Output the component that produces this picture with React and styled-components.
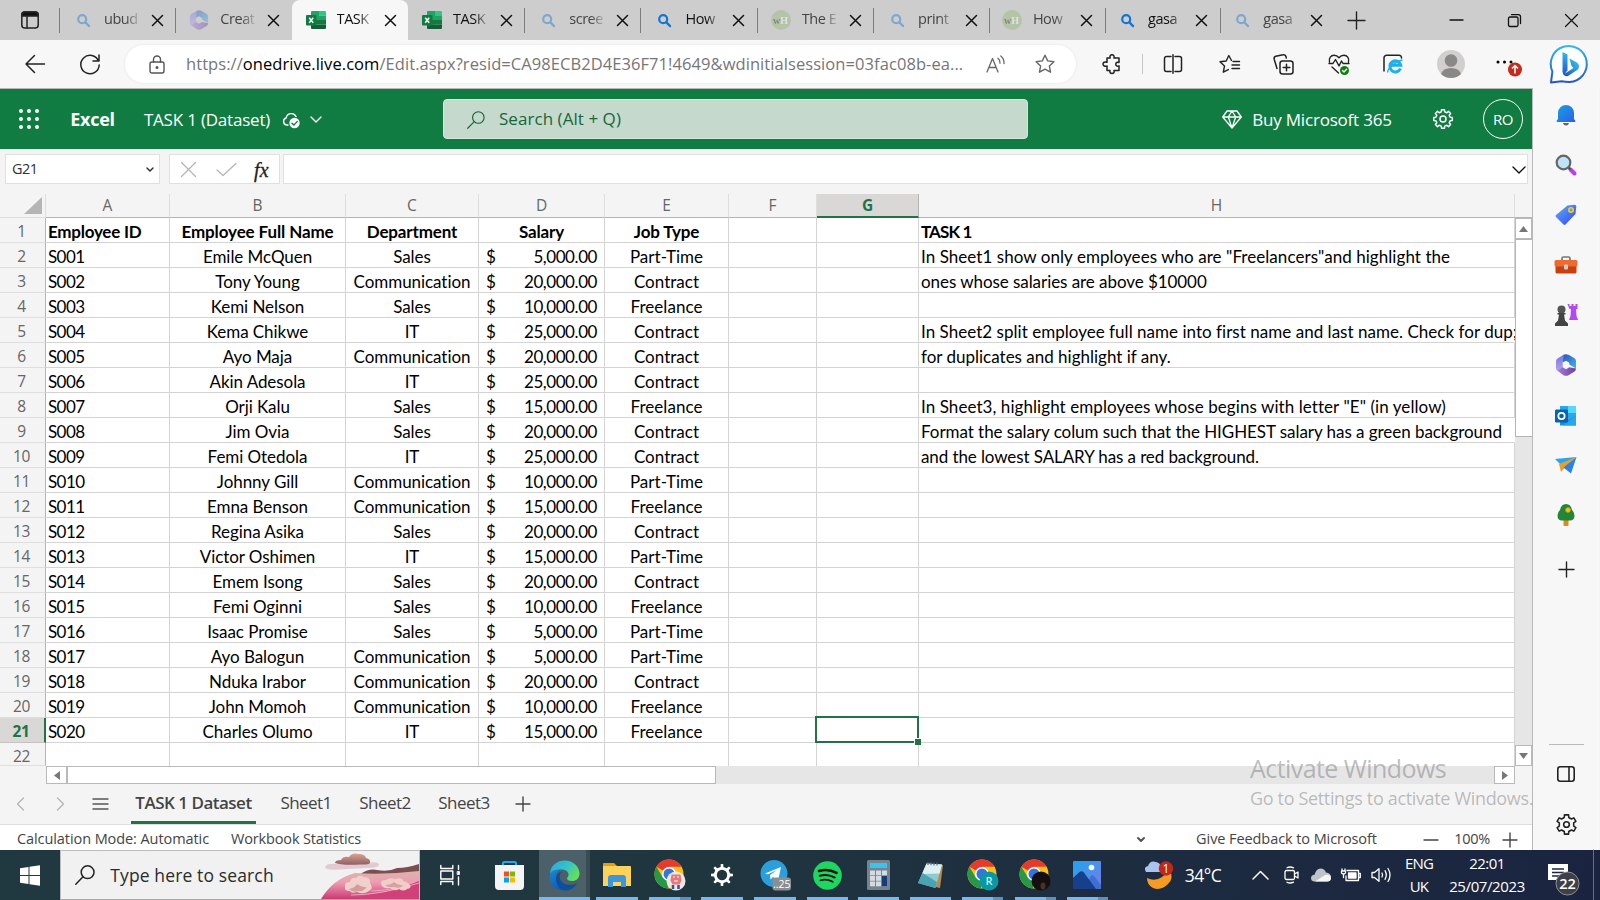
import React from 'react';
import styled, { createGlobalStyle, css } from 'styled-components';

const UI = '"Open Sans", "Noto Sans", sans-serif';
const CELL = 'Lato, "Open Sans", sans-serif';

const Global = createGlobalStyle`
  html, body { margin: 0; padding: 0; background: #f4f4f4; overflow: hidden; }
  * { box-sizing: border-box; }
  svg { display: block; flex: none; overflow: visible; }
`;

const Desktop = styled.div`
  width: 1600px;
  height: 900px;
  display: flex;
  flex-direction: column;
  overflow: hidden;
  position: relative;
  font-family: ${UI};
`;

const Label = styled.span`
  font-size: ${(p) => p.$size}px;
  letter-spacing: ${(p) => p.$ls || 0}px;
  font-weight: ${(p) => p.$weight || 400};
  color: ${(p) => p.$color || 'inherit'};
  white-space: nowrap;
  line-height: 1.3;
`;

const Slot = styled.div`
  width: ${(p) => p.$w}px;
  height: ${(p) => (p.$h ? `${p.$h}px` : '100%')};
  margin-left: ${(p) => p.$ml || 0}px;
  padding-top: ${(p) => p.$pt || 0}px;
  flex: none;
  display: flex;
  align-items: center;
  justify-content: center;
`;

/* ---------- tab strip ---------- */

const TabStrip = styled.div`
  height: 40px;
  flex: none;
  display: flex;
  background: #cdcdcd;
`;

const TabRule = styled.div`
  width: 1px;
  height: 25px;
  align-self: center;
  background: ${(p) => (p.$hidden ? 'transparent' : '#7c7c7c')};
`;

const Tab = styled.div`
  width: ${(p) => (p.$narrow ? 115.2 : 116.3)}px;
  flex: none;
  height: 40px;
  display: flex;
  align-items: center;
  border-radius: 8px 8px 0 0;
  background: ${(p) => (p.$active ? '#f7f7f7' : 'transparent')};
`;

const TabIcon = styled.div`
  width: 20px;
  height: 20px;
  margin-left: ${(p) => (p.$narrow ? 11.5 : 13)}px;
  display: flex;
  align-items: center;
  justify-content: center;
  opacity: ${(p) => (p.$dim ? 0.42 : 1)};
`;

const TabTitle = styled.div`
  width: 36px;
  height: 24px;
  margin-left: 11px;
  overflow: hidden;
  white-space: nowrap;
  font-size: 14.5px;
  letter-spacing: -0.45px;
  line-height: 22px;
  color: ${(p) => (p.$dim ? '#444' : '#111')};
  mask-image: linear-gradient(90deg, #000 60%, transparent 105%);
`;

const TabClose = styled.div`
  margin-left: 12px;
`;

/* ---------- toolbar ---------- */

const Toolbar = styled.div`
  height: 48px;
  flex: none;
  display: flex;
  align-items: center;
  background: #f7f7f7;
`;

const AddressBar = styled.div`
  width: 951px;
  height: 38px;
  margin-left: 10px;
  padding-left: 12px;
  padding-right: 7px;
  border-radius: 19px;
  background: #fff;
  box-shadow: 0 0 3px rgba(0, 0, 0, 0.08);
  display: flex;
  align-items: center;
`;

const Url = styled.div`
  flex: 1;
  margin-left: 9px;
  font-size: 16.5px;
  letter-spacing: 0.07px;
  line-height: 24px;
  color: #767676;
  white-space: nowrap;
  b { font-weight: 400; color: #000; }
`;

const Divider = styled.div`
  width: 1px;
  height: 20px;
  background: #c6c6c6;
`;

/* ---------- page ---------- */

const Body = styled.div`
  height: 762px;
  flex: none;
  display: flex;
`;

const Page = styled.div`
  width: 1533px;
  flex: none;
  display: flex;
  flex-direction: column;
  background: #f4f4f4;
  border-top: 1px solid #b9b9b9;
  border-right: 1px solid #b9b9b9;
`;

const Suite = styled.div`
  height: 60px;
  flex: none;
  display: flex;
  align-items: center;
  background: #107c41;
  color: #fff;
`;

const SuiteSearch = styled.div`
  width: 585px;
  height: 40px;
  margin-left: 122px;
  padding: 1px 0 0 23px;
  border-radius: 4px;
  border: 1px solid #d5e6db;
  background: #c5d9cc;
  color: #15673a;
  display: flex;
  align-items: center;
  gap: 14px;
`;

const Initials = styled.div`
  width: 40px;
  height: 40px;
  margin-left: 30px;
  padding-top: 2px;
  border: 1px solid #fff;
  border-radius: 50%;
  display: flex;
  align-items: center;
  justify-content: center;
`;

const FormulaBar = styled.div`
  height: 45px;
  flex: none;
  padding: 5px 0 0 5px;
  display: flex;
`;

const FormulaBox = styled.div`
  width: ${(p) => p.$w}px;
  height: 30px;
  margin-right: ${(p) => p.$mr || 0}px;
  padding: 1px ${(p) => p.$pr || 0}px 0 6px;
  border: 1px solid #e0e0e0;
  background: #fff;
  color: #333;
  display: flex;
  align-items: center;
  justify-content: space-between;
`;

const Fx = styled.span`
  font: italic 400 20px "Liberation Serif", serif;
  letter-spacing: 0.3px;
  line-height: 24px;
  color: #222;
  -webkit-text-stroke: 0.3px #222;
`;

/* ---------- sheet ---------- */

const SheetArea = styled.div`
  height: 572px;
  flex: none;
  display: flex;
`;

const Sheet = styled.div`
  width: 1515px;
  flex: none;
  height: 572px;
  overflow: hidden;
`;

const GridRow = styled.div`
  display: grid;
  grid-template-columns: 46px 124px 176px 133px 126px 124px 88px 102px 596px;
  grid-template-rows: 100%;
  height: ${(p) => p.$h || 25}px;
`;

const ColHead = styled.div`
  border-right: 1px solid ${(p) => (p.$on ? '#b5b5b5' : '#dedede')};
  border-bottom: ${(p) => (p.$on ? '2px solid #217346' : '1px solid #b5b5b5')};
  background: ${(p) => (p.$on ? '#d9d8d6' : '#f4f4f4')};
  color: ${(p) => (p.$on ? '#217346' : '#666')};
  font-weight: ${(p) => (p.$on ? 700 : 400)};
  font-size: 15.5px;
  line-height: 22px;
  text-align: center;
`;

const Corner = styled.div`
  border-right: 1px solid #dedede;
  border-bottom: 1px solid #dedede;
  display: flex;
  align-items: flex-end;
  justify-content: flex-end;
  padding: 0 3px 3px 0;
`;

const RowHead = styled.div`
  padding: 1px 2px 0 0;
  font-size: 15.5px;
  line-height: 24px;
  letter-spacing: -0.3px;
  text-align: center;
  border-bottom: 1px solid ${(p) => (p.$on ? '#c4c4c4' : '#dedede')};
  border-right: ${(p) => (p.$on ? '2px solid #217346' : '1px solid #b5b5b5')};
  background: ${(p) => (p.$on ? '#d9d8d6' : '#f4f4f4')};
  color: ${(p) => (p.$on ? '#217346' : '#666')};
  font-weight: ${(p) => (p.$on ? 700 : 400)};
`;

const Cell = styled.div`
  position: relative;
  padding: 1.5px ${(p) => p.$pad || 2}px 0;
  border-right: 1px solid ${(p) => (p.$open ? '#fff' : '#d4d4d4')};
  border-bottom: ${(p) => (p.$last ? 0 : 1)}px solid #d4d4d4;
  background: #fff;
  color: #000;
  font-family: ${CELL};
  font-size: 17px;
  line-height: 24px;
  letter-spacing: ${(p) => (p.$ls === undefined ? -0.06 : p.$ls)}px;
  font-weight: ${(p) => (p.$bold ? 700 : 400)};
  text-align: ${(p) => (p.$center ? 'center' : 'left')};
  white-space: nowrap;
  ${(p) => p.$money && css`
    display: flex;
    justify-content: space-between;
  `}
`;

const Selection = styled.div`
  position: absolute;
  z-index: 2;
  inset: -2px -1px -1px -2px;
  border: 2px solid #217346;
  &::after {
    content: '';
    position: absolute;
    right: -4px;
    bottom: -4px;
    width: 6px;
    height: 6px;
    background: #217346;
    border: solid #fff;
    border-width: 1px 0 0 1px;
  }
`;

const VScroll = styled.div`
  width: 17px;
  padding-top: 24px;
  display: flex;
  flex-direction: column;
  background: linear-gradient(#f4f4f4 23px, #b5b5b5 23px, #b5b5b5 24px, #e6e6e6 24px);
`;

const ScrollButton = styled.div`
  width: ${(p) => p.$w}px;
  height: ${(p) => p.$h}px;
  flex: none;
  border: 1px solid #b9b9b9;
  background: #fff;
  display: flex;
  align-items: center;
  justify-content: center;
`;

const VThumb = styled.div`
  width: 17px;
  height: 198px;
  border: 1px solid #b5b5b5;
  border-right: 0;
  background: #fff;
  margin-bottom: auto;
`;

const HScroll = styled.div`
  height: 18px;
  flex: none;
  width: 1469px;
  margin-left: 46px;
  display: flex;
  background: #e6e6e6;
`;

const HThumb = styled.div`
  width: 649px;
  height: 18px;
  margin-right: auto;
  border: 1px solid #b9b9b9;
  background: #fff;
`;

const SheetTabs = styled.div`
  height: 41px;
  flex: none;
  display: flex;
  align-items: center;
  border-bottom: 1px solid #dedede;
  color: #444;
`;

const SheetTab = styled.div`
  width: ${(p) => p.$w}px;
  height: 40px;
  margin-left: ${(p) => p.$ml || 0}px;
  flex: none;
  display: flex;
  align-items: center;
  justify-content: center;
  padding-top: ${(p) => (p.$on ? 1 : 0)}px;
  padding-bottom: ${(p) => (p.$on ? 0 : 2)}px;
  border-bottom: ${(p) => (p.$on ? '3px solid #217346' : '0')};
`;

const StatusBar = styled.div`
  height: 25px;
  flex: none;
  display: flex;
  align-items: center;
  padding: 4px 15px 0 17px;
  background: #fff;
  color: #444;
`;

const Side = styled.div`
  width: 66px;
  background: #f7f7f7;
  display: flex;
  flex-direction: column;
  align-items: center;
  padding-top: 2px;
`;

const SideRule = styled.div`
  width: 35px;
  height: 1px;
  margin: auto 0 3px;
  background: #b9b9b9;
`;

const Watermark = styled.div`
  position: absolute;
  left: 1250px;
  top: 752px;
  width: 283px;
  display: flex;
  flex-direction: column;
  gap: 2px;
  color: rgba(120, 120, 120, 0.48);
`;

/* ---------- taskbar ---------- */

const Taskbar = styled.div`
  height: 50px;
  flex: none;
  display: flex;
  align-items: center;
  color: #fff;
  background: linear-gradient(90deg, #203840 0%, #20363f 45%, #1d2c3f 70%, #1a2440 100%);
`;

const TaskSearch = styled.div`
  width: 360px;
  height: 50px;
  flex: none;
  padding-left: 14px;
  display: flex;
  align-items: center;
  border: 1px solid #bdbdbd;
  border-bottom-color: #a8a8a8;
  background: #f1f1f1;
  color: #2b2b2b;
`;

const TaskApp = styled.div`
  width: ${(p) => p.$w}px;
  height: 50px;
  flex: none;
  display: flex;
  flex-direction: column;
  align-items: center;
  justify-content: space-between;
  background: ${(p) => (p.$on ? 'linear-gradient(90deg, #4b6068 47px, #3a4b52 47px)' : 'transparent')};
  &::before { content: ''; height: 3px; }
  &::after {
    content: '';
    width: ${(p) => (p.$bar ? p.$bar : 0)}px;
    height: 3px;
    background: ${(p) => (p.$multi ? 'linear-gradient(90deg, #76b9ed 75%, #5b91bc 75%)' : '#76b9ed')};
  }
`;

const Stack = styled.div`
  width: ${(p) => p.$w}px;
  margin-left: ${(p) => p.$ml || 0}px;
  flex: none;
  display: flex;
  flex-direction: column;
  align-items: center;
  gap: 3px;
`;

/* ---------- icons ---------- */

const Line = ({ w = 20, h, box, c = '#222', sw = 1.3, children }) => (
  <svg width={w} height={h || w} viewBox={box || `0 0 ${w} ${h || w}`} fill="none" stroke={c} strokeWidth={sw} strokeLinecap="round" strokeLinejoin="round">{children}</svg>
);
const Cross = ({ s = 11, c = '#111', sw = 1.5 }) => <Line w={s} c={c} sw={sw}><path d={`M.5.5l${s - 1} ${s - 1}M${s - 0.5}.5l-${s - 1} ${s - 1}`} /></Line>;
const PlusIcon = ({ s = 16, c = '#222', sw = 1.4 }) => <Line w={s} c={c} sw={sw}><path d={`M${s / 2} 0v${s}M0 ${s / 2}h${s}`} /></Line>;
const Chevron = ({ w = 9, h = 5, c = '#333', sw = 1.4 }) => <Line w={w} h={h} c={c} sw={sw}><path d={`M0 0l${w / 2} ${h}l${w / 2}-${h}`} /></Line>;
const Magnifier = ({ s = 13, c = '#1474d0', sw = 2.2 }) => <Line w={s} box="0 0 13 13" c={c} sw={sw}><circle cx="5.2" cy="5.2" r="4" /><path d="M8.4 8.4l3.7 3.7" /></Line>;
const ThinSearch = ({ s = 20, c, sw = 1.3 }) => <Line w={s} box="0 0 20 20" c={c} sw={sw}><circle cx="12.6" cy="7.2" r="6.4" /><path d="M8 11.8L.8 19.2" /></Line>;

const ExcelIcon = () => (
  <svg width="20" height="18" viewBox="0 0 20 18">
    <path d="M6 0h7v9H5V1a1 1 0 011-1z" fill="#21a366" /><path d="M13 0h6a1 1 0 011 1v3.5h-7z" fill="#33c481" />
    <path d="M13 4.5h7V9h-7z" fill="#21a366" /><path d="M5 9h8v4.500H5z" fill="#107c41" /><path d="M13 9h7v4.500h-7z" fill="#107c41" />
    <path d="M5 13.500h15V17a1 1 0 01-1 1H6a1 1 0 01-1-1z" fill="#185c37" />
    <rect y="4" width="10.500" height="10.500" rx="1" fill="#107c41" />
    <path d="M3.200 6.800l4 5M7.200 6.800l-4 5" stroke="#fff" strokeWidth="1.500" />
  </svg>
);
const M365 = ({ s = 22 }) => (
  <svg width={s} height={s} viewBox="0 0 22 22">
    <defs>
      <linearGradient id="ma" x1="0" y1="0" x2="1" y2="1"><stop offset="0" stopColor="#2b50b8" /><stop offset="1" stopColor="#42b8e8" /></linearGradient>
      <linearGradient id="mb" x1="0" y1="0" x2="0" y2="1"><stop offset="0" stopColor="#6d78e0" /><stop offset="1" stopColor="#b7a1ee" /></linearGradient>
      <linearGradient id="mc" x1="0" y1="0" x2="1" y2="0"><stop offset="0" stopColor="#a07ee0" /><stop offset="1" stopColor="#6f3f98" /></linearGradient>
    </defs>
    <path d="M8.500.8q2.500-1.200 5 0l6 3.500Q21 5.300 21 7v7.500l-6.700-4V8.700L11 6.800 7.500 8.500V2z" fill="url(#ma)" />
    <path d="M9 .6L7.700 8.200v7.300L3 17.300q-2-.8-2-3.300V7.500q0-2 1.500-3z" fill="url(#mb)" />
    <path d="M2.500 16.800l5.200-3.500L11 15.200l3.300-2 6.700 1.300q0 2-1.500 3l-6 3.700q-2.500 1.200-5 0z" fill="url(#mc)" />
  </svg>
);
const WikiIcon = () => (
  <svg width="20" height="20" viewBox="0 0 20 20"><circle cx="10" cy="10" r="10" fill="#93b874" /><text x="2" y="13.500" fontFamily="Liberation Serif, serif" fontWeight="700" fontSize="10" fill="#222">w<tspan fill="#fff">H</tspan></text></svg>
);
const Workspaces = () => (
  <Line w={18} sw={1.5} c="#222"><rect x=".8" y="1" width="16.400" height="16" rx="3" /><path d="M1 3.500Q1 1 3.500 1h11Q17 1 17 3.500V5H1z" fill="#111" /><path d="M6 5v12" /></Line>
);
const Lock = () => <Line w={16} h={19} c="#555" sw={1.4}><rect x="1" y="7" width="14" height="11" rx="2" /><path d="M4.500 7V4.500a3.500 3.500 0 017 0V7" /><circle cx="8" cy="12.500" r=".8" fill="#555" /></Line>;
const Puzzle = () => <Line w={20} sw={1.5}><path d="M5 4h3.200C7.400 1.800 8.500.8 10 .8s2.700 1 1.900 3.200H17v4.500c-2-.8-3.200.2-3.200 1.700s1.200 2.500 3.200 1.700V16.500h-5c.7 2-.5 3-2 3s-2.600-1-2-3H5V12c-2.200.7-4-.2-4-1.900s1.800-2.600 4-1.900z" /></Line>;
const Split = () => <Line w={20} sw={1.5}><path d="M8 2.500H3.500a2 2 0 00-2 2v11a2 2 0 002 2H8M12 2.500h4.500a2 2 0 012 2v11a2 2 0 01-2 2H12M10 .8v18.400" /></Line>;
const FavList = () => <Line w={21} h={20} sw={1.4}><path d="M12.500 6.500L9.800 1.500 7.200 7l-6.200.8 4.500 4.200-1.200 6.200 5-2.600M14 7.500h6.500M13 11h7.500M13 14.500h7.500" /></Line>;
const StarIcon = () => <Line w={20} c="#666" sw={1.4}><path d="M10 1.200l2.700 5.700 6.200.8-4.500 4.300 1.100 6.200L10 15.200l-5.500 3 1.100-6.200L1.100 7.700l6.200-.8z" /></Line>;
const Collections = () => <Line w={21} sw={1.5}><rect x="7" y="7" width="13" height="13" rx="2.500" /><path d="M13.500 10.200v6.600M10.200 13.500h6.600M4 14.500L1.200 5.200A2.400 2.400 0 012.800 2.300L10 .8a2.400 2.400 0 013 2l.3 1.200" /></Line>;
const Health = () => (
  <Line w={22} h={21} sw={1.4}><path d="M1.500 8C.5 4 3 1.200 6 1.200c2.500 0 4 1.300 5 2.600 1-1.300 2.500-2.600 5-2.600 3 0 5.500 2.800 4.500 6.800M1 9.500h4l2.500-4L11 12l2.500-5 1.500 2.500h6M4 13l6.500 6" /><circle cx="16.500" cy="16.500" r="4.500" fill="#107c10" stroke="none" /><path d="M14.500 16.500l1.500 1.500 2.600-2.800" stroke="#fff" /></Line>
);
const IEMode = () => (
  <svg width="22" height="21" viewBox="0 0 22 21"><path d="M2 17V4a2.700 2.700 0 012.700-2.700H17A2.500 2.500 0 0119.500 4" fill="none" stroke="#222" strokeWidth="1.500" strokeLinecap="round" />
    <path d="M18.500 14.500a5.500 5.500 0 11.300-3.200H9" fill="none" stroke="#1fb0ea" strokeWidth="3" /><path d="M6 18.500c-1.500-2 6-11 14.500-12.500" fill="none" stroke="#1fb0ea" strokeWidth="1.400" /></svg>
);
const Avatar = () => (
  <svg width="28" height="28" viewBox="0 0 28 28"><circle cx="14" cy="14" r="14" fill="#d2d0ce" /><circle cx="14" cy="10.500" r="6.300" fill="#8a8886" /><path d="M4 24q2-6 10-6t10 6q-4 4-10 4T4 24z" fill="#8a8886" /></svg>
);
const More = () => (
  <svg width="28" height="22" viewBox="0 0 28 22"><circle cx="3" cy="9" r="1.500" /><circle cx="9.500" cy="9" r="1.500" /><circle cx="16" cy="9" r="1.500" /><circle cx="20" cy="16.500" r="7" fill="#c42b1c" /><path d="M20 20.500V13M17 15.500l3-3 3 3" fill="none" stroke="#fff" strokeWidth="1.500" /></svg>
);
const Bing = () => (
  <svg width="40" height="40" viewBox="0 0 40 40">
    <defs><linearGradient id="ba" x1="0" y1="0" x2="0" y2="1"><stop offset="0" stopColor="#2fb9ee" /><stop offset="1" stopColor="#2754c9" /></linearGradient><linearGradient id="bb" x1="0" y1="1" x2="1" y2="0"><stop offset="0" stopColor="#1b48c8" /><stop offset="1" stopColor="#38d6e8" /></linearGradient></defs>
    <path d="M2 38.500l1.400-11A18 18 0 1120.500 38q-4 0-8-.800z" fill="#fff" stroke="url(#ba)" strokeWidth="2" strokeLinejoin="round" />
    <path d="M13.500 8l5 2.500v15.700L15 31q-1.500-1.500-1.500-3.500z" fill="url(#ba)" /><path d="M20.500 14.500l7.500 4q3.500 2.700 1 7L19 32q-3 1-4.500-1.500l10-6.500-2-2z" fill="url(#bb)" />
  </svg>
);
const Waffle = () => <svg width="20" height="20" viewBox="0 0 20 20" fill="#fff">{[2, 10, 18].map((x) => [2, 10, 18].map((y) => <circle key={`${x}-${y}`} cx={x} cy={y} r="2" />))}</svg>;
const CloudSaved = () => (
  <Line w={19} h={17} c="#fff" sw={1.4}><path d="M6 13H4.500a3.600 3.600 0 01-.3-7A5.200 5.200 0 0114 4.500" /><circle cx="12.500" cy="11" r="5.200" fill="#fff" stroke="none" /><path d="M10 11.200l1.900 1.900 3.400-3.700" stroke="#107c41" /></Line>
);
const Diamond = () => <Line w={20} h={19} c="#fff" sw={1.3}><path d="M5 1h10l4.300 6L10 18 .7 7zM.7 7h18.600M6.300 7L10 18l3.700-11M6.300 7L10 1l3.700 6" /></Line>;
const cog = (n, R, r, c, a = 0.3, b = 0.42) => {
  let d = '';
  for (let i = 0; i < n; i += 1) {
    [[-b, r], [-a, R], [a, R], [b, r]].forEach(([o, rad], j) => {
      const t = ((i + o) * 2 * Math.PI) / n;
      d += `${i + j === 0 ? 'M' : 'L'}${(c + rad * Math.sin(t)).toFixed(2)} ${(c - rad * Math.cos(t)).toFixed(2)}`;
    });
  }
  return `${d}z`;
};
const Gear = ({ s = 20, c = '#fff', n = 8, sw = 1.5, hole = 3, inner = 7.3 }) => <Line w={s} box="0 0 20 20" c={c} sw={sw}><path d={cog(n, 9.4, inner, 10, 0.2, 0.3)} /><circle cx="10" cy="10" r={hole} /></Line>;
const SolidGear = () => <svg width="22" height="22" viewBox="0 0 22 22"><path fillRule="evenodd" fill="#fff" d={`${cog(8, 11, 8.2, 11, 0.14, 0.22)}M11 5.800a5.200 5.200 0 100 10.400 5.200 5.200 0 000-10.400z`} /></svg>;
const Tri = ({ d, w = 9, h = 6 }) => <svg width={w} height={h} viewBox={`0 0 ${w} ${h}`}><path d={d} fill="#777" /></svg>;

const Bell = () => <svg width="20" height="22" viewBox="0 0 20 22"><defs><linearGradient id="be" x1="0" y1="0" x2="1" y2="1"><stop offset="0" stopColor="#1aa0e4" /><stop offset="1" stopColor="#2a5fe6" /></linearGradient></defs><path d="M2 15V9a8 8 0 0116 0v6l1.500 2q0 1-1 1h-17q-1 0-1-1z" fill="url(#be)" /><path d="M7 19h6q-.5 2.500-3 2.500T7 19z" fill="#666" /></svg>;
const ColorSearch = () => <svg width="22" height="22" viewBox="0 0 22 22"><path d="M15.500 15.500l4 4" stroke="#c23af0" strokeWidth="4" strokeLinecap="round" /><path d="M12.500 12.500l3 3" stroke="#555" strokeWidth="2.500" /><circle cx="8.500" cy="8.500" r="6.800" fill="#bfe3f7" stroke="#666" strokeWidth="2.200" /></svg>;
const Tag = () => <svg width="22" height="22" viewBox="0 0 22 22"><defs><linearGradient id="tg" x1="0" y1="0" x2="1" y2="1"><stop offset="0" stopColor="#5fb0fa" /><stop offset="1" stopColor="#3345f0" /></linearGradient></defs><path d="M12.500 1.500l7-.8q1.800 0 1.800 1.800L20.500 10 10.500 20.500q-1 .8-2 0L1 13q-1-1 0-2z" fill="url(#tg)" /><circle cx="16" cy="6" r="2.200" fill="#79b" stroke="#f7d21c" strokeWidth="1.500" /></svg>;
const Toolbox = () => <svg width="24" height="18" viewBox="0 0 24 18"><path d="M8 4V2.500Q8 1 9.500 1h5Q16 1 16 2.500V4" fill="none" stroke="#777" strokeWidth="1.700" /><rect x="1.500" y="9" width="21" height="8.500" rx="1.500" fill="#c93f10" /><rect x=".5" y="4" width="23" height="6.500" rx="1.500" fill="#ef6a2e" /><rect x="10" y="8.500" width="4" height="5" rx="1" fill="#ccc" /></svg>;
const Chess = () => <svg width="24" height="24" viewBox="0 0 24 24"><path d="M13.500 1h2v2h2V1h2v2h2V1h2v5h-1.500l.5 7 1.500 4h-9l1.500-4 .5-7h-1.500z" fill="#b347f5" /><circle cx="7.500" cy="6.500" r="4" fill="#555" /><path d="M3.500 10h8v1.500H10l1 6 3 3V23H1v-2.500l3-3 1-6H3.500z" fill="#444" /></svg>;
const Outlook = () => <svg width="22" height="21" viewBox="0 0 22 21"><path d="M5 1h15a1 1 0 011 1v17H5z" fill="#28a8ea" /><path d="M13 1h7a1 1 0 011 1v6h-8z" fill="#50d9ff" /><path d="M5 20.500V11l8 4.500 8-4.500v9.500z" fill="#1490df" /><path d="M21 11v9.500H8z" fill="#28a8ea" /><rect y="4.500" width="13" height="13" rx="1.200" fill="#0a64ad" /><circle cx="6.500" cy="11" r="3.200" fill="none" stroke="#fff" strokeWidth="1.700" /></svg>;
const Plane = () => <svg width="22" height="18" viewBox="0 0 22 18"><path d="M0 3L21.500 1 6 9z" fill="#2aa3f0" /><path d="M21.500 1L4 8l2 8 3.500-3.700z" fill="#e8a02c" /><path d="M21.500 1L8.500 11.500 16 17.500z" fill="#2f7fe8" /></svg>;
const Tree = () => <svg width="18" height="22" viewBox="0 0 18 22"><rect x="6.500" y="14" width="5" height="8" rx="1" fill="#e08a1e" /><path d="M9 0q5 0 6 6 2.500 2 2.500 5.500 0 5-4.500 5H5q-4.500 0-4.500-5Q.5 8 3 6 4 0 9 0z" fill="#238636" /><path d="M11 3.500v5M8.500 6h5" stroke="#f6b91a" strokeWidth="2.800" /></svg>;
const Panel = () => <Line w={18} h={16} sw={1.6}><rect x=".8" y=".8" width="16.400" height="14.400" rx="2.500" /><path d="M12 1v14" /></Line>;

const Edge = () => (
  <svg width="31" height="31" viewBox="0 0 31 31"><defs><linearGradient id="ea" x1="0" y1="0" x2="1" y2=".5"><stop offset="0" stopColor="#2aa7e2" /><stop offset=".6" stopColor="#35c4c8" /><stop offset="1" stopColor="#62df5b" /></linearGradient><linearGradient id="eb" x1="0" y1="0" x2=".3" y2="1"><stop offset="0" stopColor="#1a86d8" /><stop offset="1" stopColor="#0f5fb5" /></linearGradient></defs>
    <path d="M1 14C1.500 5 8.500.5 15.500.5c9 0 15 6.500 15 13 0 5-3.500 7.500-7.500 7.500-3.500 0-5-1.500-5-2.500s1.500-1.500 1.500-4c0-2.500-2.500-5-7-5S2 12 1 14z" fill="url(#ea)" />
    <path d="M1 13.500C2.500 10.500 7 9 11.500 9.500c-3 1-5.500 5-4.500 9.500s5 9.500 11 9.500c-1 1.500-3 2-5 1.800C5 29.500.5 23 .5 17z" fill="url(#eb)" />
    <path d="M13 12c-2 1-3 4-2 7s5 6 10 6c3 0 5.500-1 7-2-2 4.500-6.500 7.500-11.500 7.500C10 30 7 24 7 19.500 7 15.500 9.500 12 13 12z" fill="#0c4fa0" /></svg>
);
const Explorer = () => <svg width="28" height="24" viewBox="0 0 28 24"><path d="M0 1q0-1 1-1h10l3 3H0z" fill="#e3a008" /><path d="M0 3h27q1 0 1 1v19H0z" fill="#ffd35a" /><path d="M5 24v-9q0-3 3-3h12q3 0 3 3v9h-5v-5h-8v5z" fill="#3a96dd" /></svg>;
const Chrome = ({ children }) => (
  <svg width="32" height="32" viewBox="0 0 32 32"><circle cx="15" cy="15" r="14.500" fill="#fbc116" /><path d="M15 15L2.400 7.800A14.500 14.500 0 0127.600 7.800H15z" fill="#e33b2e" /><path d="M2.400 7.800L8.800 18.500 15 22l-1 7.500A14.500 14.500 0 012.400 7.800z" fill="#279847" /><circle cx="15" cy="15" r="7" fill="#fff" /><circle cx="15" cy="15" r="5.500" fill="#3573e0" />{children}</svg>
);
const Face = () => <g><circle cx="22" cy="22" r="9.500" fill="#eee8e2" /><path d="M17.500 15.500h9l1 6-2 4h-7l-2-4z" fill="#e8767a" /><path d="M19 18h2M23 18h2M20 22h4" stroke="#fff" strokeWidth="1.200" /><path d="M19 26v4M24.500 26v4" stroke="#2d55a5" strokeWidth="2.500" /></g>;
const RBadge = () => <g><circle cx="22" cy="22" r="9.500" fill="#0b97a4" /><text x="22" y="26" textAnchor="middle" fontFamily="Open Sans, sans-serif" fontSize="11" fontWeight="600" fill="#c5eef0">R</text></g>;
const DarkBadge = () => <g><circle cx="22" cy="22" r="9.500" fill="#15100f" /><ellipse cx="24" cy="27" rx="2.500" ry="3.500" fill="#4a3026" /></g>;
const Telegram = () => (
  <svg width="32" height="32" viewBox="0 0 32 32"><circle cx="15" cy="14.500" r="13.500" fill="#2a9fdc" /><path d="M6 14.500L22 8l-3 14-5-4-2.500 2.500-.5-4.500 7-5-9 4.200z" fill="#fff" /><rect x="13.500" y="18.500" width="18.500" height="13" rx="3" fill="#8a8f92" /><text x="22.700" y="29" textAnchor="middle" fontFamily="Open Sans, sans-serif" fontSize="10.500" fill="#fff">..25</text></svg>
);
const Spotify = () => <svg width="29" height="29" viewBox="0 0 29 29"><circle cx="14.500" cy="14.500" r="14.300" fill="#1ed760" /><g fill="none" stroke="#101010" strokeLinecap="round"><path d="M6 10q9-2.800 17.500 1.800" strokeWidth="2.600" /><path d="M6.800 14.800q7.500-2.200 14.700 1.600" strokeWidth="2.200" /><path d="M7.500 19.300q6.500-1.700 12.200 1.400" strokeWidth="1.800" /></g></svg>;
const Calculator = () => (
  <svg width="23" height="30" viewBox="0 0 23 30"><rect width="23" height="30" rx="1.500" fill="#75838f" /><rect x="3" y="3" width="17" height="5" fill="#39c4ee" />
    {[10.5, 16, 21.5].map((y) => [3, 9, 15].map((x) => <rect key={`${x}${y}`} x={x} y={y} width="5" height={4.8} fill="#d4dbe1" />))}<rect x="15" y="16" width="5" height="10.300" fill="#153e78" /></svg>
);
const Notes = () => <svg width="27" height="27" viewBox="0 0 27 27"><path d="M10 2l16 1-3 23-4-1z" fill="#b98b4a" /><path d="M9.500 1.500L25 2.500 18.500 26 1 21z" fill="#8fcad2" /><path d="M9.500 1.500L25 2.500l-2.500 9L5 12z" fill="#dff0f2" /><path d="M5.500 11L1 21l17.500 5 1.500-6z" fill="#4aa3b1" /><path d="M11 0v3M14 .2v3M17 .4v3M20 .6v3" stroke="#667" strokeWidth="1.200" /></svg>;
const Photos = () => <svg width="28" height="28" viewBox="0 0 28 28"><defs><linearGradient id="ph" x1="0" y1="0" x2="1" y2="1"><stop offset="0" stopColor="#1fa6ee" /><stop offset="1" stopColor="#7a7be6" /></linearGradient></defs><rect width="28" height="28" rx="1" fill="url(#ph)" /><circle cx="18.500" cy="6.500" r="2.800" fill="#fff" /><path d="M9 28l9-13q1.500-1.500 3 0l7 9v4z" fill="#3f6fd0" /><path d="M0 17l6.500-6q2-1.600 4 0L23 28H0z" fill="#163f8c" /></svg>;
const Store = () => <svg width="29" height="29" viewBox="0 0 29 29"><path d="M8 5V2.500Q8 1 9.500 1h10Q21 1 21 2.500V5" fill="none" stroke="#23a9ea" strokeWidth="2.200" /><path d="M0 4h29v21q0 4-4 4H4q-4 0-4-4z" fill="#f4f4f4" /><path d="M9 10.500h5v5H9z" fill="#f25022" /><path d="M15 10.500h5v5h-5z" fill="#7fba00" /><path d="M9 16.500h5v5H9z" fill="#00a4ef" /><path d="M15 16.500h5v5h-5z" fill="#ffb900" /></svg>;
const WinLogo = () => <svg width="20" height="21" viewBox="0 0 20 21" fill="#fff"><path d="M0 3.200l8.500-1.200v8H0zM9.500 1.800L20 .3V10H9.500zM0 11h8.500v8L0 17.800zM9.500 11H20v9.700l-10.500-1.500z" /></svg>;
const TaskView = () => <Line w={20} h={20} c="#fff" sw={1.4}><path d="M.8.500v3h12v-3M.8 19.500v-3h12v3M18.500.500v4M18.500 12v8" /><rect x=".8" y="6" width="12" height="8" /><rect x="17.500" y="6.500" width="2" height="3" fill="#fff" strokeWidth=".8" /></Line>;
const Scenery = () => (
  <svg width="98" height="48" viewBox="0 0 98 48">
    <defs><linearGradient id="hill" x1="0" y1="0" x2="0" y2="1"><stop offset="0" stopColor="#d9b6a8" /><stop offset=".4" stopColor="#ef9cb4" /><stop offset="1" stopColor="#c93c74" /></linearGradient><linearGradient id="cl" x1="0" y1="0" x2="0" y2="1"><stop offset="0" stopColor="#dca58e" /><stop offset="1" stopColor="#8e5f66" /></linearGradient></defs>
    <path d="M4 16q2-4 12-3l30-1q12-2 12 2 0 3-12 3l-20 1Q4 20 4 16z" fill="#e3c9d2" />
    <path d="M14 12q0-3 6-3 2-4 8-3 3-5 10-3 6 0 7 4 5 1 4 5-2 2-10 1.500-18 1-25-1.500z" fill="url(#cl)" />
    <path d="M38 24q10-7 18-5 12 2 20-2 10 0 22-4v14H38z" fill="#7b4f52" />
    <path d="M0 48q12-20 34-26 30 2 64-2v28z" fill="url(#hill)" />
    <path d="M45 44q25-3 53-14v18H38z" fill="#cf4178" /><path d="M30 44q30 0 68-12M50 40q20 0 44-9" stroke="#f5a3c1" strokeWidth="1" fill="none" />
    <path d="M24 36q-1-5 5-5 1-5 6-4 3-4 8-1 7 0 6 6 4 5-1 8-5 4-12 1-6 2-7-1-6 0-5-4z" fill="#f0d0ca" /><path d="M28 38q6-1 8-5 5 4 10 3-4 5-8 4-6 2-10-2z" fill="#d49c9c" />
    <path d="M60 33q-1-4 5-4 4-3 9-1 8-2 8 2 5 1 7 4 2 3-3 4-3 3-8 0-4 3-9-1-8 1-9-4z" fill="#f0cdc8" /><path d="M64 34q6 0 9-3 4 4 9 3-2 4-9 2-6 1-9-2z" fill="#d8a0a2" />
  </svg>
);
const Weather = () => <svg width="30" height="28" viewBox="0 0 30 28"><path d="M3 17q8 4 15-1 5-4 8-7 4 9-2 14-7 7-15 4-6-3-6-10z" fill="#f59a22" /><path d="M2 11q-3-5 2-6 2-6 8-4 5 1 4 5 4 3 1 5z" fill="#a9c4ec" /><circle cx="22" cy="7.500" r="7.200" fill="#c3261c" /><text x="22" y="12" textAnchor="middle" fontFamily="Open Sans, sans-serif" fontSize="12" fill="#fff">1</text></svg>;
const MeetNow = () => <Line w={16} h={18} c="#fff" sw={1.3}><rect x="1" y="4.500" width="9.500" height="9" rx="1.500" /><path d="M10.500 8l3.500-2v6l-3.500-2M3 1.800q3-1.600 6.500 0M3 16.200q3 1.600 6.500 0" /></Line>;
const OneDrive = () => <svg width="20" height="14" viewBox="0 0 20 14"><path d="M3 13.500Q0 13 0 10t3.500-3.200Q5 1 9.500.500q4 0 5.500 4 5 .5 5 5 0 4-4 4z" fill="#bfc2c6" /><path d="M4 13.500L14 7q6-1 6 3 0 3.500-4 3.500z" fill="#f5f5f5" /></svg>;
const Battery = () => <Line w={20} h={14} c="#fff" sw={1.3}><path d="M6 2.500h11.500v10H5V8M17.800 5.500h1.500v4h-1.500M1 1v2M4 1v2M.5 3h4v2q-2 2-4 0zM2.500 6v3.500" /><rect x="7.500" y="5" width="7.500" height="5" fill="#fff" /></Line>;
const Speaker = () => <Line w={20} h={16} c="#fff" sw={1.3}><path d="M1 5.500h2.500L8 1.800v12.500L3.500 10.500H1zM11 6q1.200 2 0 4M14 3.700q2.600 4.300 0 8.600M17 1.500q4 6.500 0 13" /></Line>;
const Notifications = () => (
  <svg width="32" height="31" viewBox="0 0 32 31"><path d="M0 0h20v16h-8l-4 4v-4H0z" fill="#fff" /><path d="M4 5h12M4 8.500h12M4 12h8" stroke="#1b2840" strokeWidth="1.400" /><circle cx="19.500" cy="19.500" r="11.500" fill="#3d4046" stroke="#8c8f94" /><text x="19.500" y="25" textAnchor="middle" fontFamily="Open Sans, sans-serif" fontWeight="600" fontSize="14.500" fill="#fff">22</text></svg>
);

/* ---------- data ---------- */

const TABS = [
  ['search', 'ubud', 1], ['m365', 'Creat', 1], ['excel', 'TASK', 0], ['excel', 'TASK', 0], ['search', 'scree', 1], ['search', 'How', 0],
  ['wiki', 'The E', 1], ['search', 'print', 1], ['wiki', 'How', 1], ['search', 'gasa', 0], ['search', 'gasa', 1],
];

const PEOPLE = [
  ['Emile McQuen', 'Sales', 5, 'Part-Time'], ['Tony Young', 'Communication', 20, 'Contract'], ['Kemi Nelson', 'Sales', 10, 'Freelance'],
  ['Kema Chikwe', 'IT', 25, 'Contract'], ['Ayo Maja', 'Communication', 20, 'Contract'], ['Akin Adesola', 'IT', 25, 'Contract'],
  ['Orji Kalu', 'Sales', 15, 'Freelance'], ['Jim Ovia', 'Sales', 20, 'Contract'], ['Femi Otedola', 'IT', 25, 'Contract'],
  ['Johnny Gill', 'Communication', 10, 'Part-Time'], ['Emna Benson', 'Communication', 15, 'Freelance'], ['Regina Asika', 'Sales', 20, 'Contract'],
  ['Victor Oshimen', 'IT', 15, 'Part-Time'], ['Emem Isong', 'Sales', 20, 'Contract'], ['Femi Oginni', 'Sales', 10, 'Freelance'],
  ['Isaac Promise', 'Sales', 5, 'Part-Time'], ['Ayo Balogun', 'Communication', 5, 'Part-Time'], ['Nduka Irabor', 'Communication', 20, 'Contract'],
  ['John Momoh', 'Communication', 10, 'Freelance'], ['Charles Olumo', 'IT', 15, 'Freelance'],
];

/* row number -> text and letter spacing of the note in column H */
const NOTES = {
  2: ['In Sheet1 show only employees who are "Freelancers"and highlight the', 0.055],
  3: ['ones whose salaries are above $10000', -0.06],
  5: ['In Sheet2 split employee full name into first name and last name. Check for dup;', 0.03],
  6: ['for duplicates and highlight if any.', 0],
  8: ['In Sheet3, highlight employees whose begins with letter "E" (in yellow)', 0.07],
  9: ['Format the salary colum such that the HIGHEST salary has a green background', -0.05],
  10: ['and the lowest SALARY has a red background.', -0.1],
};

const FAVICON = { search: <Magnifier />, m365: <M365 s={20} />, excel: <ExcelIcon />, wiki: <WikiIcon /> };

const DataRow = ({ n }) => {
  const p = PEOPLE[n - 2];
  const note = NOTES[n] || ['', 0];
  const last = n === 22;
  return (
    <GridRow $h={last ? 23 : 25}>
      <RowHead $on={n === 21}>{n}</RowHead>
      <Cell $last={last} $ls={-0.6}>{p && `S${String(n - 1).padStart(3, '0')}`}</Cell>
      <Cell $last={last} $center>{p && p[0]}</Cell>
      <Cell $last={last} $center>{p && p[1]}</Cell>
      <Cell $last={last} $money $pad={7} $ls={-0.43}>{p && <><span>$</span><span>{p[2]},000.00</span></>}</Cell>
      <Cell $last={last} $center $ls={0.03}>{p && p[3]}</Cell>
      <Cell $last={last} />
      <Cell $last={last}>{n === 21 && <Selection />}</Cell>
      <Cell $last={last} $ls={note[1]} $open={n === 5 || n === 9}>{note[0]}</Cell>
    </GridRow>
  );
};

export default function App() {
  return (
    <Desktop>
      <Global />
      <TabStrip>
        <Slot $w={59}><Workspaces /></Slot>
        {TABS.map(([icon, title, dim], i) => (
          <Tab key={i} $active={i === 2} $narrow={i > 7}>
            <TabRule $hidden={i === 2 || i === 3} />
            <TabIcon $dim={dim} $narrow={i > 7}>{FAVICON[icon]}</TabIcon>
            <TabTitle $dim={dim}>{title}</TabTitle>
            <TabClose><Cross /></TabClose>
          </Tab>
        ))}
        <TabRule />
        <Slot $w={44}><PlusIcon s={17} /></Slot>
        <Slot $w={78} $ml={39}><Line w={13} h={2} c="#111"><path d="M0 1h13" /></Line></Slot>
        <Slot $w={37}><Line w={13} c="#111"><rect x=".5" y="3" width="9.500" height="9.500" rx="1.500" /><path d="M3.500.6h7a2 2 0 012 2v7" /></Line></Slot>
        <Slot $w={78}><Cross s={13} sw={1.2} /></Slot>
      </TabStrip>

      <Toolbar>
        <Slot $w={50} $ml={10}><Line w={20} sw={1.5}><path d="M19.500 10H1M9.500 1.500L1 10l8.500 8.500" /></Line></Slot>
        <Slot $w={50} $ml={5}><Line w={20} h={21} sw={1.5}><path d="M18.500 7A9.200 9.200 0 1019.200 11M19 1v6h-6" /></Line></Slot>
        <AddressBar>
          <Slot $w={40}><Lock /></Slot>
          <Url>https://<b>onedrive.live.com</b>/Edit.aspx?resid=CA98ECB2D4E36F71!4649&amp;wdinitialsession=03fac08b-ea...</Url>
          <Slot $w={49}><Line w={19} h={18} c="#666" sw={1.3}><path d="M1 17L6.500 3.500 12 17M3 12.500h7M12 3.200q2.300 1.800 2 5M14.800 1q3.500 2.800 3.200 7.500" /></Line></Slot>
          <Slot $w={49}><StarIcon /></Slot>
        </AddressBar>
        <Slot $w={60} $ml={6}><Puzzle /></Slot>
        <Divider />
        <Slot $w={60}><Split /></Slot>
        <Slot $w={52}><FavList /></Slot>
        <Slot $w={56}><Collections /></Slot>
        <Slot $w={55}><Health /></Slot>
        <Slot $w={54}><IEMode /></Slot>
        <Slot $w={61}><Avatar /></Slot>
        <Slot $w={56}><More /></Slot>
        <Slot $w={63}><Bing /></Slot>
      </Toolbar>

      <Body>
        <Page>
          <Suite>
            <Slot $w={58}><Waffle /></Slot>
            <Slot $w={45} $ml={12} $pt={2}><Label $size={18} $weight={700} $ls={-0.3}>Excel</Label></Slot>
            <Slot $w={126} $ml={29} $pt={2}><Label $size={17} $ls={-0.2}>TASK 1 (Dataset)</Label></Slot>
            <Slot $w={19} $ml={12} $pt={2}><CloudSaved /></Slot>
            <Slot $w={10} $ml={10}><Chevron w={10} c="#fff" /></Slot>
            <SuiteSearch><ThinSearch s={18} c="#15673a" /><Label $size={17} $ls={0.05}>Search (Alt + Q)</Label></SuiteSearch>
            <Slot $w={20} $ml={194}><Diamond /></Slot>
            <Slot $w={140} $ml={10} $pt={2}><Label $size={17} $ls={-0.2}>Buy Microsoft 365</Label></Slot>
            <Slot $w={20} $ml={41}><Gear n={8} /></Slot>
            <Initials><Label $size={15} $ls={-0.4}>RO</Label></Initials>
          </Suite>

          <FormulaBar>
            <FormulaBox $w={155} $mr={9} $pr={6}><Label $size={14.5} $ls={-0.5}>G21</Label><Chevron w={6} h={3} sw={1.5} /></FormulaBox>
            <FormulaBox $w={111} $mr={3} $pr={10}>
              <Slot $w={24}><Cross s={15} c="#b5b5b5" sw={1.3} /></Slot>
              <Slot $w={20}><Line w={19} h={13} c="#b5b5b5"><path d="M0 7l6 5.500L19 .5" /></Line></Slot>
              <Fx>fx</Fx>
            </FormulaBox>
            <FormulaBox $w={1245} $pr={2}><span /><Chevron w={12} h={6} c="#111" /></FormulaBox>
          </FormulaBar>

          <SheetArea>
            <Sheet>
              <GridRow $h={24}>
                <Corner><svg width="18" height="17" viewBox="0 0 18 17"><path d="M18 0v17H0z" fill="#b5b5b5" /></svg></Corner>
                {['A', 'B', 'C', 'D', 'E', 'F', 'G', 'H'].map((c) => <ColHead key={c} $on={c === 'G'}>{c}</ColHead>)}
              </GridRow>
              <GridRow>
                <RowHead>1</RowHead>
                <Cell $bold $ls={-0.25}>Employee ID</Cell>
                <Cell $bold $center $ls={-0.12}>Employee Full Name</Cell>
                <Cell $bold $center $ls={-0.15}>Department</Cell>
                <Cell $bold $center $ls={-0.15}>Salary</Cell>
                <Cell $bold $center $ls={-0.15}>Job Type</Cell>
                <Cell />
                <Cell />
                <Cell $bold $ls={-0.9}>TASK 1</Cell>
              </GridRow>
              {Array.from({ length: 21 }, (_, i) => <DataRow key={i} n={i + 2} />)}
            </Sheet>
            <VScroll>
              <ScrollButton $w={17} $h={21}><Tri d="M4.500 0L9 6H0z" /></ScrollButton>
              <VThumb />
              <ScrollButton $w={17} $h={21}><Tri d="M0 0h9L4.500 6z" /></ScrollButton>
            </VScroll>
          </SheetArea>
          <HScroll>
            <ScrollButton $w={21} $h={18}><Tri w={6} h={9} d="M6 0v9L0 4.500z" /></ScrollButton>
            <HThumb />
            <ScrollButton $w={21} $h={18}><Tri w={6} h={9} d="M0 0v9l6-4.500z" /></ScrollButton>
          </HScroll>

          <SheetTabs>
            <Slot $w={40}><Line w={7} h={12} c="#b5b5b5"><path d="M6.500 0L.5 6l6 6" /></Line></Slot>
            <Slot $w={41}><Line w={7} h={12} c="#b5b5b5"><path d="M.5 0l6 6-6 6" /></Line></Slot>
            <Slot $w={39}><Line w={15} h={12} c="#555" sw={1.4}><path d="M0 1h15M0 6h15M0 11h15" /></Line></Slot>
            <SheetTab $w={125} $ml={11} $on><Label $size={17} $weight={600} $ls={-0.5}>TASK 1 Dataset</Label></SheetTab>
            <SheetTab $w={52} $ml={24}><Label $size={17} $ls={-0.6}>Sheet1</Label></SheetTab>
            <SheetTab $w={52} $ml={27}><Label $size={17} $ls={-0.5}>Sheet2</Label></SheetTab>
            <SheetTab $w={52} $ml={27}><Label $size={17} $ls={-0.5}>Sheet3</Label></SheetTab>
            <Slot $w={65}><PlusIcon s={14} c="#444" /></Slot>
          </SheetTabs>
          <StatusBar>
            <Slot $w={192}><Label $size={14.5} $ls={-0.08}>Calculation Mode: Automatic</Label></Slot>
            <Slot $w={130} $ml={22}><Label $size={14.5} $ls={-0.15}>Workbook Statistics</Label></Slot>
            <Slot $w={10} $ml={775}><Chevron w={6} h={3} c="#555" sw={2} /></Slot>
            <Slot $w={181} $ml={50}><Label $size={14.5} $ls={-0.08}>Give Feedback to Microsoft</Label></Slot>
            <Slot $w={14} $ml={47}><Line w={14} h={2} c="#444"><path d="M0 1h14" /></Line></Slot>
            <Slot $w={36} $ml={16}><Label $size={14.5} $ls={-0.3}>100%</Label></Slot>
            <Slot $w={14} $ml={13}><PlusIcon s={14} c="#444" /></Slot>
          </StatusBar>
        </Page>
        <Side>
          {[Bell, ColorSearch, Tag, Toolbox, Chess, M365, Outlook, Plane, Tree].map((Icon, i) => <Slot key={i} $w={50} $h={50}><Icon /></Slot>)}
          <Slot $w={50} $h={58}><PlusIcon s={15} /></Slot>
          <SideRule />
          <Slot $w={50} $h={51}><Panel /></Slot>
          <Slot $w={50} $h={51}><Gear s={21} c="#222" n={6} inner={7} hole={2.7} /></Slot>
        </Side>
      </Body>

      <Taskbar>
        <Slot $w={60}><WinLogo /></Slot>
        <TaskSearch>
          <ThinSearch s={20} c="#222" sw={1.5} />
          <Slot $w={164} $ml={15}><Label $size={17.5} $ls={0.13}>Type here to search</Label></Slot>
          <Slot $w={98} $ml={47}><Scenery /></Slot>
        </TaskSearch>
        <Slot $w={60}><TaskView /></Slot>
        <TaskApp $w={59}><Store /></TaskApp>
        <TaskApp $w={51} $bar={51} $on><Edge /></TaskApp>
        <TaskApp $w={53} $bar={42}><Explorer /></TaskApp>
        <TaskApp $w={53} $bar={42} $multi><Chrome><Face /></Chrome></TaskApp>
        <TaskApp $w={52} $bar={42}><SolidGear /></TaskApp>
        <TaskApp $w={53} $bar={42}><Telegram /></TaskApp>
        <TaskApp $w={52} $bar={41}><Spotify /></TaskApp>
        <TaskApp $w={51} $bar={41}><Calculator /></TaskApp>
        <TaskApp $w={52} $bar={41}><Notes /></TaskApp>
        <TaskApp $w={53} $bar={41} $multi><Chrome><RBadge /></Chrome></TaskApp>
        <TaskApp $w={52} $bar={41} $multi><Chrome><DarkBadge /></Chrome></TaskApp>
        <TaskApp $w={52} $bar={41} $multi><Photos /></TaskApp>
        <Slot $w={30} $ml={31}><Weather /></Slot>
        <Slot $w={38} $ml={10}><Label $size={17.5} $ls={-0.5}>34°C</Label></Slot>
        <Slot $w={16} $ml={30}><Line w={15} h={8} c="#fff" sw={1.5}><path d="M0 8l7.500-7.500L15 8" /></Line></Slot>
        <Slot $w={16} $ml={16}><MeetNow /></Slot>
        <Slot $w={20} $ml={11}><OneDrive /></Slot>
        <Slot $w={20} $ml={10}><Battery /></Slot>
        <Slot $w={20} $ml={10}><Speaker /></Slot>
        <Stack $w={30} $ml={13}><Label $size={15} $ls={-0.9}>ENG</Label><Label $size={15} $ls={-0.9}>UK</Label></Stack>
        <Stack $w={80} $ml={13}><Label $size={15} $ls={-0.5}>22:01</Label><Label $size={15} $ls={-0.4}>25/07/2023</Label></Stack>
        <Slot $w={32} $ml={21} $pt={9}><Notifications /></Slot>
        <Slot $w={1} $ml={13}><Line w={1} h={50} c="#66707f" sw={1}><path d="M.5 0v50" /></Line></Slot>
      </Taskbar>

      <Watermark>
        <Label $size={25} $ls={-0.57}>Activate Windows</Label>
        <Label $size={18} $ls={-0.34}>Go to Settings to activate Windows.</Label>
      </Watermark>
    </Desktop>
  );
}
